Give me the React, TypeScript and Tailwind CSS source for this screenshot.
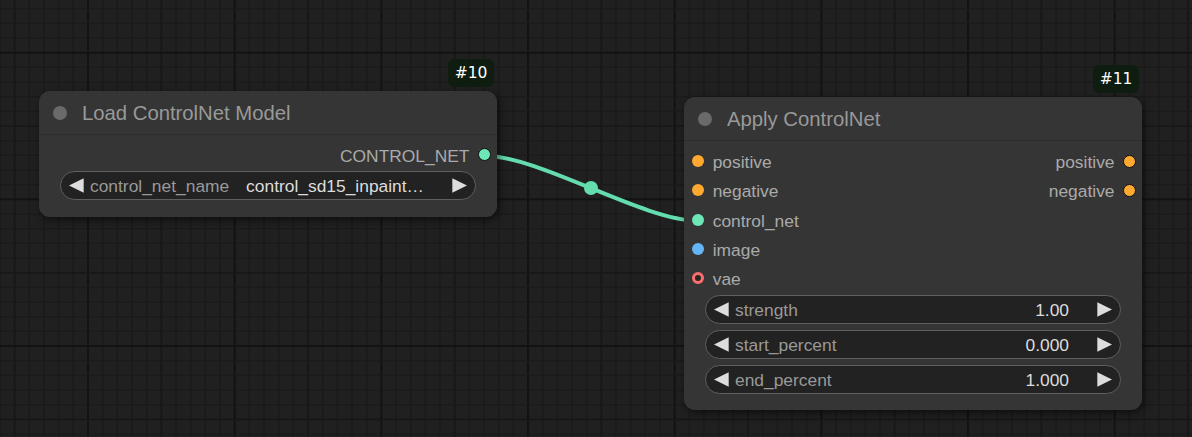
import React from "react";

const CELL = 14.667;

type SlotKind = "cond" | "cnet" | "image" | "vae";

const dotColor: Record<SlotKind, string> = {
  cond: "bg-[#ffa931]",
  cnet: "bg-[#6ee7b7]",
  image: "bg-[#64b5f6]",
  vae: "bg-[#ff6e6e]",
};

const Grid = () => {
  const vertical = Array.from({ length: 82 }, (_, i) => i - 6);
  const horizontal = Array.from({ length: 30 }, (_, i) => i - 3);
  const tone = (k: number) => {
    const m = ((k % 10) + 10) % 10;
    if (m === 0) return { stroke: "#131313", w: 2 };
    if (m === 5) return { stroke: "#171717", w: 1.6 };
    return { stroke: "#1a1a1a", w: 1.3 };
  };
  return (
    <svg className="absolute inset-0" width={1192} height={437}>
      {vertical.map((k) => {
        const x = 88 + k * CELL;
        const t = tone(k);
        return <line key={"v" + k} x1={x} y1={0} x2={x} y2={437} stroke={t.stroke} strokeWidth={t.w} />;
      })}
      {horizontal.map((k) => {
        const y = 52.7 + k * CELL;
        const t = tone(k);
        return <line key={"h" + k} x1={0} y1={y} x2={1192} y2={y} stroke={t.stroke} strokeWidth={t.w} />;
      })}
    </svg>
  );
};

const Link = () => (
  <svg className="absolute inset-0" width={1192} height={437}>
    <path
      d="M484 155.7 C539.9 155.7 642.1 220.7 698 220.7"
      fill="none"
      stroke="#64dcad"
      strokeWidth={4}
      strokeLinecap="round"
    />
    <circle cx={591} cy={188} r={7} fill="#64dcad" />
  </svg>
);

const Arrow = ({ dir }: { dir: "left" | "right" }) => (
  <svg width={15} height={15} viewBox="0 0 15 15" className="shrink-0">
    {dir === "left" ? (
      <polygon points="14.7,0.2 0,7.5 14.7,14.8" fill="#dddddd" />
    ) : (
      <polygon points="0.3,0.2 15,7.5 0.3,14.8" fill="#dddddd" />
    )}
  </svg>
);

const Widget = ({ label, value }: { label: string; value: string }) => (
  <div className="mx-[21px] flex h-[29px] items-center rounded-full border border-[#5f5f5f] bg-[#222222] pl-[8px] pr-[8px] text-[17.4px] leading-none">
    <Arrow dir="left" />
    <span className="relative top-[1px] ml-[6px] text-[#999999] whitespace-nowrap">{label}</span>
    <span className="relative top-[1px] ml-auto mr-[28px] text-[#dddddd] whitespace-nowrap">{value}</span>
    <Arrow dir="right" />
  </div>
);

const InputSlot = ({ label, kind }: { label: string; kind: SlotKind }) => (
  <div className="flex items-center pl-[8px]">
    {kind === "vae" ? (
      <span className="h-3 w-3 rounded-full border-[3.5px] border-[#ff6e6e] bg-[#262626]" />
    ) : (
      <span className={"h-3 w-3 rounded-full " + dotColor[kind]} />
    )}
    <span className="relative top-[1px] ml-[8.7px] text-[#aaaaaa]">{label}</span>
  </div>
);

const OutputSlot = ({ label, kind }: { label: string; kind: SlotKind }) => (
  <div className="flex items-center pr-[6px]">
    <span className="relative top-[1px] mr-[8.5px] text-[#aaaaaa]">{label}</span>
    <span className={"h-[13px] w-[13px] rounded-full border-[1.5px] border-[#111111] " + dotColor[kind]} />
  </div>
);

interface NodeProps {
  id: number;
  title: string;
  className: string;
  children: React.ReactNode;
}

const Node = ({ id, title, className, children }: NodeProps) => (
  <div className={"absolute w-[458px] " + className}>
    <div className="absolute -top-[32px] right-[3px] flex h-[28px] w-[46px] items-center justify-center rounded-[6px] bg-[#0e1d0f] pt-[1px] font-['DejaVu_Sans',sans-serif] text-[15.5px] text-white">
      #{id}
    </div>
    <div className="rounded-[11px] bg-[#353535] shadow-[2px_3px_8px_rgba(0,0,0,0.55)]">
      <div className="flex h-[44px] items-center border-b border-[#2c2c2c] pl-[14.3px]">
        <span className="h-[14px] w-[14px] rounded-full bg-[#6a6a6a]" />
        <span className="relative top-[1px] ml-[14.7px] text-[20.3px] text-[#999999]">{title}</span>
      </div>
      {children}
    </div>
  </div>
);

export default function App() {
  return (
    <div className="relative h-[437px] w-[1192px] overflow-hidden bg-[#202020] font-['Liberation_Sans',Arial,sans-serif]">
      <Grid />
      <Link />

      <Node id={10} title="Load ControlNet Model" className="left-[39px] top-[91px]">
        <div className="pb-[16.6px] pt-[5px]">
          <div className="flex h-[29.3px] items-center justify-end text-[17.4px]">
            <OutputSlot label="CONTROL_NET" kind="cnet" />
          </div>
          <div className="mt-[2px]">
            <Widget label="control_net_name" value="control_sd15_inpaint…" />
          </div>
        </div>
      </Node>

      <Node id={11} title="Apply ControlNet" className="left-[684px] top-[97px]">
        <div className="pb-[16px] pt-[5.5px] text-[17.4px]">
          <div className="flex h-[29.3px] items-center justify-between">
            <InputSlot label="positive" kind="cond" />
            <OutputSlot label="positive" kind="cond" />
          </div>
          <div className="flex h-[29.3px] items-center justify-between">
            <InputSlot label="negative" kind="cond" />
            <OutputSlot label="negative" kind="cond" />
          </div>
          <div className="flex h-[29.3px] items-center">
            <InputSlot label="control_net" kind="cnet" />
          </div>
          <div className="flex h-[29.3px] items-center">
            <InputSlot label="image" kind="image" />
          </div>
          <div className="flex h-[29.3px] items-center">
            <InputSlot label="vae" kind="vae" />
          </div>
          <div className="mt-[2px] flex flex-col gap-[6px]">
            <Widget label="strength" value="1.00" />
            <Widget label="start_percent" value="0.000" />
            <Widget label="end_percent" value="1.000" />
          </div>
        </div>
      </Node>
    </div>
  );
}
